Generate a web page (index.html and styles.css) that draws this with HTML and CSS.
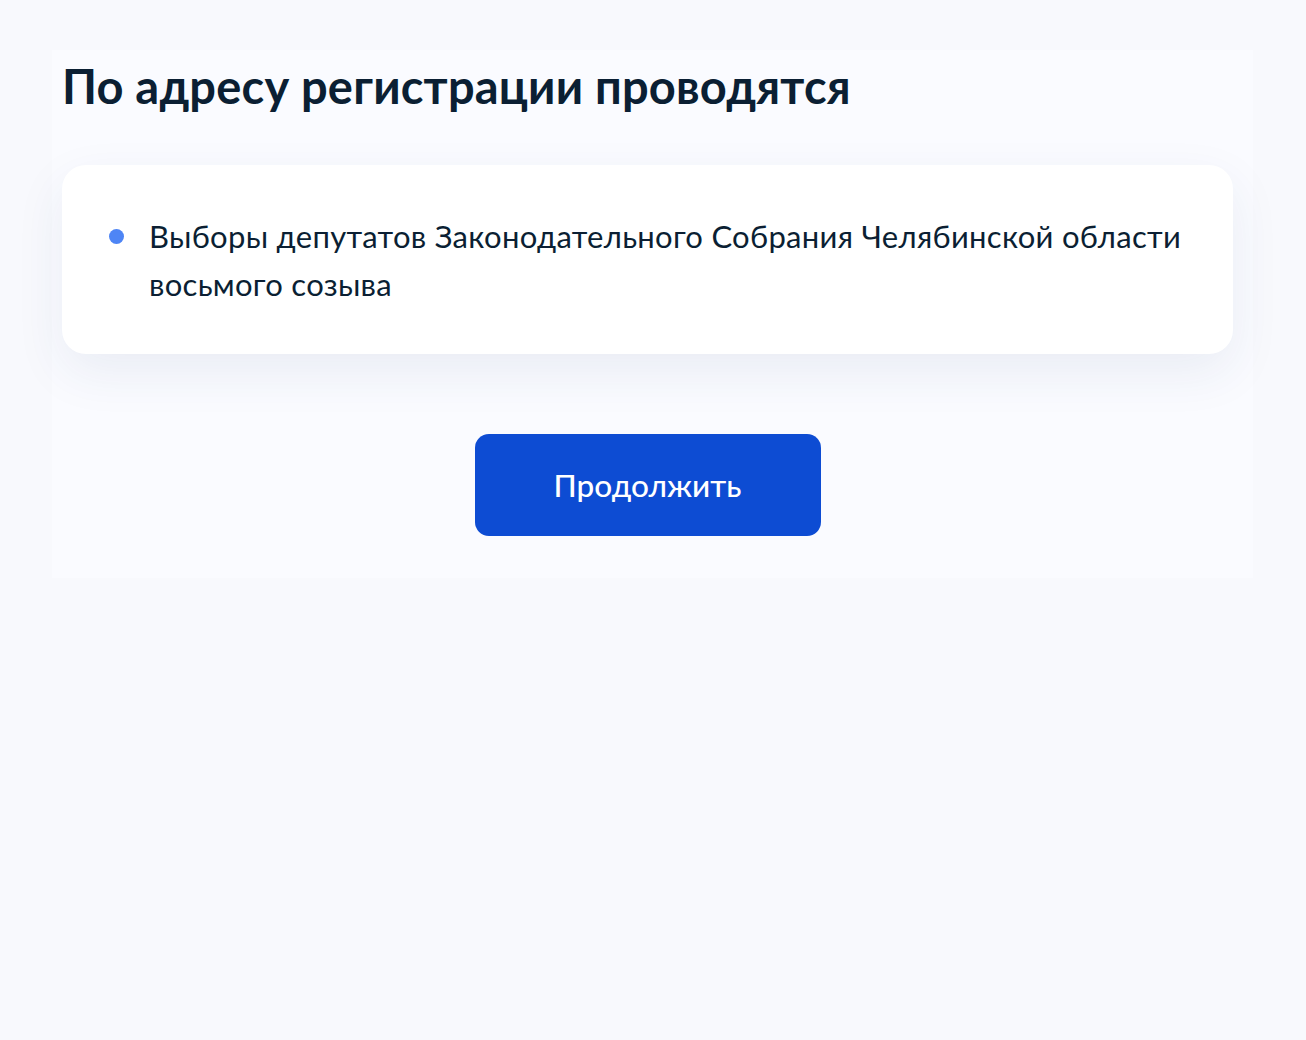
FILE: index.html
```html
<!DOCTYPE html>
<html lang="ru">
<head>
<meta charset="utf-8">
<link rel="stylesheet" href="styles.css">
</head>
<body>
<main class="panel">
  <h1 class="title">По адресу регистрации проводятся</h1>
  <section class="card">
    <ul class="list">
      <li class="item">Выборы депутатов Законодательного Собрания Челябинской области восьмого созыва</li>
    </ul>
  </section>
  <div class="actions">
    <button class="btn" type="button">Продолжить</button>
  </div>
</main>
</body>
</html>
```
FILE: styles.css
```css
html, body {
  margin: 0;
  padding: 0;
}
body {
  background: #f8f9fd;
  font-family: Lato, "Noto Sans", sans-serif;
  color: #0b1f33;
  min-height: 1040px;
  padding-top: 50px;
  box-sizing: border-box;
}
.panel {
  margin: 0 53px 0 52px;
  background: #fafbff;
  padding: 10px 20px 42px 10px;
  display: flex;
  flex-direction: column;
}
.title {
  margin: 0;
  font-size: 47px;
  line-height: 52px;
  font-weight: 700;
  letter-spacing: 0.2px;
}
.card {
  margin-top: 53px;
  background: #fff;
  border-radius: 24px;
  box-shadow: 0 18px 50px rgba(40, 60, 120, 0.08);
  padding: 47px 40px 46px 46px;
}
.list {
  margin: 0;
  padding: 0;
  list-style: none;
}
.item {
  position: relative;
  padding-left: 41px;
  font-size: 31px;
  line-height: 48px;
  letter-spacing: 0.3px;
}
.item::before {
  content: "";
  position: absolute;
  left: 1px;
  top: 17px;
  width: 15px;
  height: 15px;
  border-radius: 50%;
  background: #4e85f5;
}
.actions {
  display: flex;
  justify-content: center;
  margin-top: 80px;
}
.btn {
  width: 346px;
  height: 102px;
  border: none;
  border-radius: 14px;
  background: #0d4cd3;
  color: #fff;
  font-family: Lato, "Noto Sans", sans-serif;
  font-size: 31.5px;
  font-weight: 500;
}
```
